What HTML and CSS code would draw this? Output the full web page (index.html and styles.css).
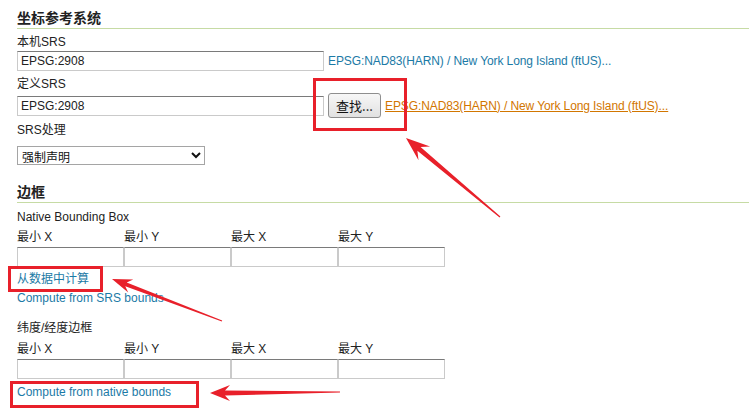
FILE: index.html
```html
<!DOCTYPE html>
<html lang="zh-CN">
<head>
  <meta charset="UTF-8" />
  <meta name="viewport" content="width=device-width, initial-scale=1.0" />
  <title>坐标参考系统</title>
  <link rel="stylesheet" href="styles.css">
</head>
<body>
  <div class="page">
    <h3 class="section-title">坐标参考系统</h3>

    <label class="field-label first">本机SRS</label>
    <div class="srs-row">
      <input type="text" class="text-input srs-input" value="EPSG:2908" />
      <a class="srs-link">EPSG:NAD83(HARN) / New York Long Island (ftUS)...</a>
    </div>

    <label class="field-label">定义SRS</label>
    <div class="srs-row declared">
      <input type="text" class="text-input srs-input" value="EPSG:2908" />
      <button class="find-button">查找...</button>
      <a class="srs-link visited">EPSG:NAD83(HARN) / New York Long Island (ftUS)...</a>
    </div>

    <label class="field-label handling">SRS处理</label>
    <select class="srs-select">
      <option>强制声明</option>
    </select>

    <h3 class="section-title bbox-title">边框</h3>

    <div class="bbox">
      <div class="bbox-name">Native Bounding Box</div>
      <div class="bbox-grid">
        <div class="bbox-cell"><span>最小 X</span><input type="text" class="text-input" /></div>
        <div class="bbox-cell"><span>最小 Y</span><input type="text" class="text-input" /></div>
        <div class="bbox-cell"><span>最大 X</span><input type="text" class="text-input" /></div>
        <div class="bbox-cell"><span>最大 Y</span><input type="text" class="text-input" /></div>
      </div>
      <a class="action-link first">从数据中计算</a>
      <a class="action-link">Compute from SRS bounds</a>
    </div>

    <div class="bbox latlon">
      <div class="bbox-name">纬度/经度边框</div>
      <div class="bbox-grid">
        <div class="bbox-cell"><span>最小 X</span><input type="text" class="text-input" /></div>
        <div class="bbox-cell"><span>最小 Y</span><input type="text" class="text-input" /></div>
        <div class="bbox-cell"><span>最大 X</span><input type="text" class="text-input" /></div>
        <div class="bbox-cell"><span>最大 Y</span><input type="text" class="text-input" /></div>
      </div>
      <a class="action-link first">Compute from native bounds</a>
    </div>
  </div>

  <!-- annotations drawn over the screenshot -->
  <svg class="notes" width="749" height="416" viewBox="0 0 749 416">
    <g fill="none" stroke="#e8202a" stroke-width="3">
      <rect x="314.5" y="79.5" width="91" height="50" />
      <rect x="9.5" y="267.5" width="92" height="23" />
      <rect x="11.5" y="382.5" width="186" height="24" />
    </g>
    <g fill="#e8202a">
      <polygon points="406,138 418.5,160.3 417.4,150.8 499.6,217.5 500.4,216.5 420.6,147 430.1,146.5" />
      <polygon points="112,279 128.2,292.6 125.3,286.3 221.8,321.5 222.2,320.5 126.7,282.5 133.2,279.6" />
      <polygon points="210,393 230,401 225,395.5 340,392.6 340,391.4 225,390.5 230,385" />
    </g>
  </svg>
</body>
</html>
```

FILE: styles.css
```css
* {
  box-sizing: border-box;
}

body {
  margin: 0;
  position: relative;
  width: 749px;
  height: 416px;
  overflow: hidden;
  background: #fff;
  color: #222;
  font-family: 'Liberation Sans', 'Noto Sans CJK SC', sans-serif;
  font-size: 12px;
}

.page {
  padding: 8px 0 0 17px;
}

.section-title {
  margin: 0;
  height: 21px;
  line-height: 20px;
  font-size: 14px;
  font-weight: bold;
  color: #222;
  border-bottom: 1px solid #c6dba4;
}

.bbox-title {
  margin-top: 17px;
}

.field-label {
  display: block;
  line-height: 18px;
  margin-top: 4px;
}

.field-label.handling {
  margin-top: 3px;
}

.text-input {
  display: block;
  height: 20px;
  padding: 0 3px;
  margin: 0;
  border: 1px solid #cacaca;
  border-top-color: #7a7a7a;
  background: #fff;
  color: #222;
  font-family: 'Liberation Sans', sans-serif;
  font-size: 12px;
  outline: none;
}

.srs-row {
  display: flex;
  align-items: center;
  gap: 4px;
}

.srs-row.declared {
  height: 25px;
}

.srs-input {
  width: 307px;
}

.srs-link {
  color: #1b7aa6;
  font-size: 12px;
  letter-spacing: -0.1px;
  cursor: pointer;
}

.srs-link.visited {
  color: #d27600;
  text-decoration: underline;
}

.find-button {
  height: 25px;
  width: 53px;
  padding: 0;
  border: 1px solid #8e8e8e;
  border-radius: 3px;
  background: linear-gradient(#f7f7f7, #e1e1e1);
  color: #111;
  font-family: 'Noto Sans CJK SC', sans-serif;
  font-size: 13px;
}

.srs-select {
  display: block;
  margin-top: 7px;
  width: 188px;
  height: 19px;
  font-family: 'Noto Sans CJK SC', sans-serif;
  font-size: 12px;
  color: #111;
  background: #fff;
  border: 1px solid #a5a5a5;
}

.bbox-name {
  line-height: 18px;
  margin-top: 5px;
}

.bbox-grid {
  display: grid;
  grid-template-columns: repeat(4, 107px);
  margin-top: 2px;
}

.bbox-cell span {
  display: block;
  line-height: 18px;
  margin-bottom: 1px;
}

.bbox-cell .text-input {
  width: 107px;
}

.action-link {
  display: block;
  line-height: 18px;
  color: #1b7aa6;
  cursor: pointer;
  margin-top: 1px;
}

.action-link.first {
  margin-top: 3px;
}

.latlon {
  margin-top: 12px;
}

.latlon .bbox-grid {
  margin-top: 3px;
}

.latlon .action-link.first {
  margin-top: 4px;
}

.notes {
  position: absolute;
  top: 0;
  left: 0;
  pointer-events: none;
}
```
